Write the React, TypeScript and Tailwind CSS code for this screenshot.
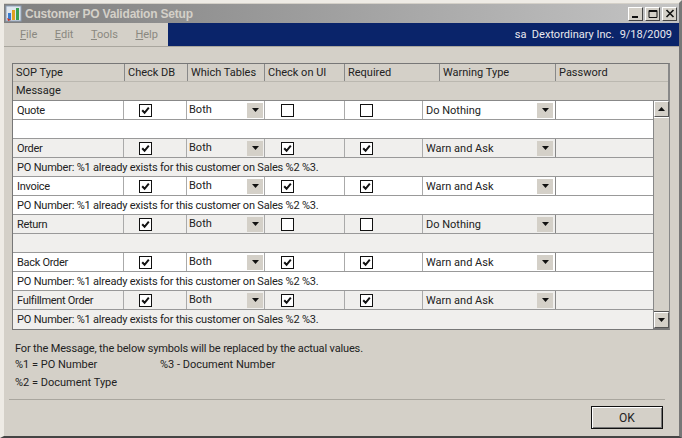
const poMessage = "PO Number: %1 already exists for this customer on Sales %2 %3.";

const rows = [
  { type: "Quote", db: true, ui: false, req: false, warn: "Do Nothing", msg: "" },
  { type: "Order", db: true, ui: true, req: true, warn: "Warn and Ask", msg: poMessage },
  { type: "Invoice", db: true, ui: true, req: true, warn: "Warn and Ask", msg: poMessage },
  { type: "Return", db: true, ui: false, req: false, warn: "Do Nothing", msg: "" },
  { type: "Back Order", db: true, ui: true, req: true, warn: "Warn and Ask", msg: poMessage },
  { type: "Fulfillment Order", db: true, ui: true, req: true, warn: "Warn and Ask", msg: poMessage },
];

const Check = ({ on }: { on: boolean }) => (
  <span className="w-[13px] h-[13px] border border-[#111] bg-white flex items-center justify-center">
    {on && (
      <svg width="9" height="9" viewBox="0 0 9 9">
        <path d="M1.2 4.2 L3.6 6.8 L7.8 1.6" fill="none" stroke="#111" strokeWidth="2" />
      </svg>
    )}
  </span>
);

const DropArrow = () => (
  <span className="w-4 h-[15px] bg-[#d4d0c8] flex items-center justify-center">
    <svg width="7" height="4" viewBox="0 0 7 4">
      <path d="M0 0H7L3.5 4Z" fill="#111" />
    </svg>
  </span>
);

const ScrollButton = ({ up }: { up: boolean }) => (
  <div className="h-[16px] w-[15px] shrink-0 bg-[#d4d0c8] border-t border-l border-t-white border-l-white border-r border-b border-r-[#555] border-b-[#555] flex items-center justify-center">
    <svg width="7" height="4" viewBox="0 0 7 4">
      <path d={up ? "M0 4H7L3.5 0Z" : "M0 0H7L3.5 4Z"} fill="#111" />
    </svg>
  </div>
);

const WinButton = ({ children }: { children: React.ReactNode }) => (
  <div className="w-[15px] h-[14px] bg-[#d4d0c8] border-t border-l border-t-white border-l-white border-r border-b border-r-[#444] border-b-[#444] flex items-center justify-center">
    <svg width="10" height="9" viewBox="0 0 10 9">{children}</svg>
  </div>
);

const headers = [
  { label: "SOP Type", w: "w-[112px]" },
  { label: "Check DB", w: "w-[63px]" },
  { label: "Which Tables", w: "w-[77px]" },
  { label: "Check on UI", w: "w-[80px]" },
  { label: "Required", w: "w-[95px]" },
  { label: "Warning Type", w: "w-[116px]" },
  { label: "Password", w: "w-[115px]" },
];

export default function App() {
  return (
    <div className="w-[682px] h-[438px] overflow-hidden bg-[#d4d0c8] text-[11px] leading-[14px] text-[#222] flex flex-col border-t-[3px] border-l-[4px] border-r-[3px] border-b-[2px] border-t-[#eeebe5] border-l-[#eeebe5] border-r-[#777] border-b-[#444] font-['Roboto',sans-serif]">
      {/* title bar */}
      <div className="h-[19px] shrink-0 bg-gradient-to-r from-[#7f7f7f] to-[#c4c4c4] flex items-center pl-[1px] pr-[2px] mt-[1px]">
        <svg width="17" height="17" viewBox="0 0 17 17" className="shrink-0">
          <rect x="1" y="1" width="15" height="15" fill="#dfe6ee" stroke="#8ea0b8" />
          <rect x="3" y="8" width="3" height="7" fill="#3a7bd0" />
          <rect x="7" y="5" width="3" height="10" fill="#e0a020" />
          <rect x="11" y="3" width="3" height="12" fill="#3aa050" />
          <path d="M2 13 L6 15 L3 16Z" fill="#c83020" />
        </svg>
        <span className="ml-[3px] font-bold text-[12px] text-[#d4d0c8] font-['Liberation_Sans',sans-serif] tracking-[-0.2px]">Customer PO Validation Setup</span>
        <div className="ml-auto flex gap-[2px]">
          <WinButton><rect x="1" y="7" width="6" height="2" fill="#111" /></WinButton>
          <WinButton><path d="M1 1.5H9V8.5H1Z" fill="none" stroke="#111" /><rect x="1" y="1" width="8" height="2" fill="#111" /></WinButton>
          <WinButton><path d="M1.5 1 L8.5 8 M8.5 1 L1.5 8" stroke="#111" strokeWidth="1.6" /></WinButton>
        </div>
      </div>
      {/* menu strip */}
      <div className="h-[24px] shrink-0 flex border-b border-b-[#a9a69e]">
        <div className="w-[164px] flex items-center text-[#8a8880] pl-[16px] gap-[17.5px]">
          <span><u>F</u>ile</span>
          <span><u>E</u>dit</span>
          <span><u>T</u>ools</span>
          <span><u>H</u>elp</span>
        </div>
        <div className="flex-1 bg-[#0a246a] text-[#e8e8ee] flex items-center justify-end pr-[7px] whitespace-pre">
          sa  Dextordinary Inc.  9/18/2009
        </div>
      </div>
      {/* grid */}
      <div className="mt-[16px] ml-[8px] w-[658px] h-[267px] shrink-0 border-t border-l border-r-2 border-b-2 border-t-[#777] border-l-[#777] border-r-[#888] border-b-[#777] flex flex-col">
        <div className="flex h-[18px] shrink-0 border-b border-b-[#bbb8b0]">
          {headers.map((h) => (
            <div key={h.label} className={`${h.w} shrink-0 pl-[3px] flex items-center border-r border-r-[#888] last:border-r-0`}>{h.label}</div>
          ))}
        </div>
        <div className="h-[19px] shrink-0 pl-[3px] flex items-center border-b border-b-[#888]">Message</div>
        <div className="flex flex-1 min-h-0">
          <div className="w-[640px] shrink-0">
            {rows.map((r, i) => (
              <div key={r.type} className={i % 2 ? "bg-[#f0efed]" : "bg-white"}>
                <div className="h-[19px] flex items-center border-b border-b-[#999]">
                  <div className="w-[111px] shrink-0 pl-[4px] border-r border-r-[#aaa] h-full flex items-center pt-[2px] tracking-[-0.3px]">{r.type}</div>
                  <div className="w-[63px] shrink-0 h-full border-r border-r-[#aaa] flex items-center pl-[15px]"><Check on={r.db} /></div>
                  <div className="w-[78px] shrink-0 h-full border-r border-r-[#aaa] flex items-center pl-[2px] pr-[1px]">
                    <span className="flex-1">Both</span>
                    <DropArrow />
                  </div>
                  <div className="w-[80px] shrink-0 h-full border-r border-r-[#aaa] flex items-center pl-[16px]"><Check on={r.ui} /></div>
                  <div className="w-[78px] shrink-0 h-full border-r border-r-[#aaa] flex items-center pl-[15px]"><Check on={r.req} /></div>
                  <div className="w-[133px] shrink-0 h-full border-r border-r-[#888] flex items-center pl-[3px] pr-[2px]">
                    <span className="flex-1 pt-[1px]">{r.warn}</span>
                    <DropArrow />
                  </div>
                  <div className="flex-1" />
                </div>
                <div className={`h-[19px] pl-[4px] pt-[1px] flex items-center tracking-[-0.2px] border-b ${i === rows.length - 1 ? "border-b-transparent" : "border-b-[#999]"}`}>{r.msg}</div>
              </div>
            ))}
          </div>
          <div className="flex-1 flex flex-col bg-[#d4d0c8] border-l border-l-[#888]">
            <ScrollButton up />
            <div className="flex-1 bg-[#d4d0c8] border-t border-b border-t-white border-b-[#555]" />
            <ScrollButton up={false} />
          </div>
        </div>
      </div>
      {/* legend */}
      <div className="mt-[12px] ml-[11px] flex flex-col">
        <div className="h-[14px] tracking-[-0.15px]">For the Message, the below symbols will be replaced by the actual values.</div>
        <div className="h-[14px] mt-[2px] flex">
          <span className="w-[145px]">%1 = PO Number</span>
          <span>%3 - Document Number</span>
        </div>
        <div className="h-[14px] mt-[4px]">%2 = Document Type</div>
      </div>
      {/* footer */}
      <div className="mt-[9px] ml-[5px] mr-[14px] border-t border-t-[#a9a69e] flex justify-end pt-[6px] pr-[2px]">
        <button className="w-[72px] h-[23px] bg-[#d4d0c8] border border-[#111] shadow-[inset_1px_1px_0_#fff,inset_-1px_-1px_0_#777] flex items-center justify-center text-[12px]">OK</button>
      </div>
    </div>
  );
}
